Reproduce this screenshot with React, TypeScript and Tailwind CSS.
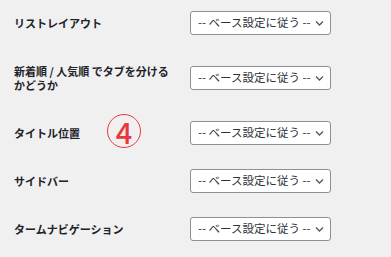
import React from 'react';

const rows = [
  'リストレイアウト',
  '新着順 / 人気順 でタブを分けるかどうか',
  'タイトル位置',
  'サイドバー',
  'タームナビゲーション',
];

function Select() {
  return (
    <div className="relative w-[141px] h-[24px] rounded-[3px] border border-[#8c8f94] bg-white flex items-center pl-[7px] text-[11.5px] text-[#2c3338] leading-none">
      <span>-- ベース設定に従う --</span>
      <svg className="absolute right-[6px] top-[8px]" width="9" height="7" viewBox="0 0 9 7" fill="none">
        <path d="M1 1.5 L4.5 5 L8 1.5" stroke="#50575e" strokeWidth="1.3" />
      </svg>
    </div>
  );
}

export default function App() {
  return (
    <div
      className="relative w-[391px] h-[257px] overflow-hidden bg-[#f0f0f1] pl-[14px]"
      style={{ fontFamily: '"Noto Sans CJK JP", "Noto Sans", sans-serif' }}
    >
      <div className="-mt-[1px] flex flex-col">
        {rows.map((label, i) => (
          <div key={i} className="flex items-center">
            <div className="w-[176px] pr-[12px] py-[17px] text-[11px] leading-[14px] font-bold text-[#1d2327]">{label}</div>
            <div className="py-[12px]">
              <Select />
            </div>
          </div>
        ))}
      </div>
      <div className="absolute left-[107px] top-[114px] w-[34px] h-[34px] rounded-full border-[1.5px] border-[#e8383d] flex items-center justify-center text-[29px] font-medium leading-none text-[#e8383d]">
        4
      </div>
    </div>
  );
}
